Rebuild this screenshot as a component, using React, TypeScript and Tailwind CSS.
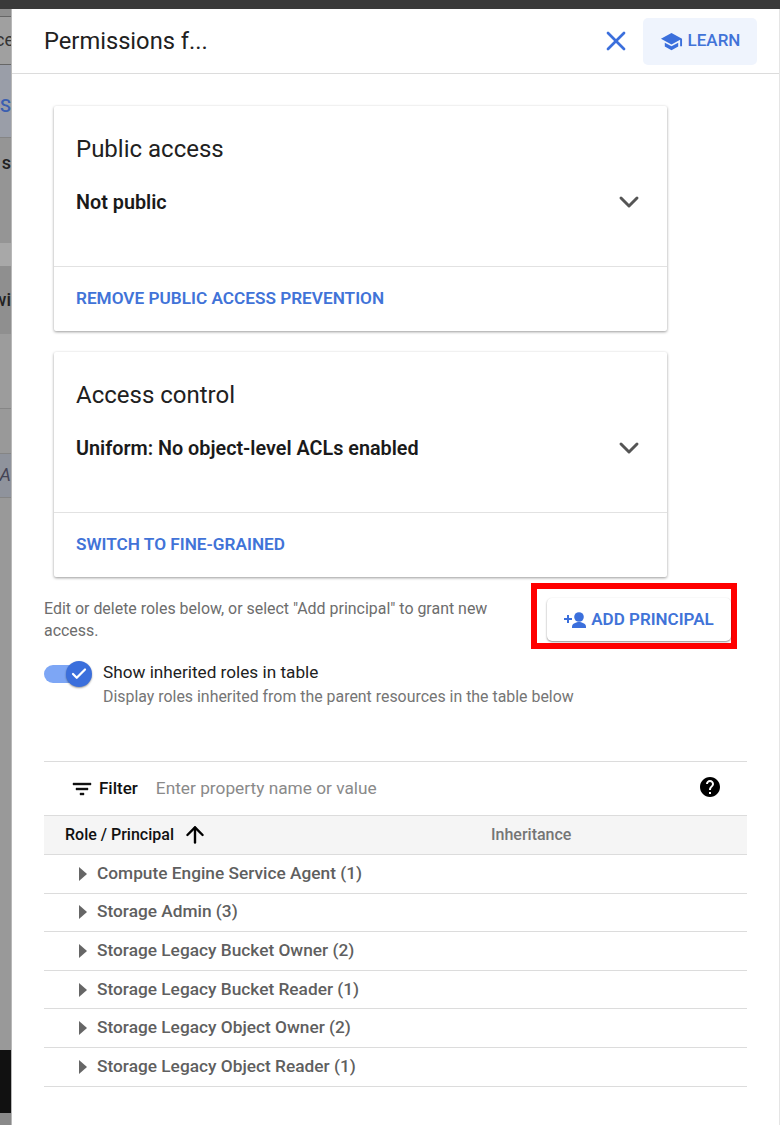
import React from "react";
import { ChevronDown, X, ArrowUp, Check } from "lucide-react";

const roles = [
  "Compute Engine Service Agent (1)",
  "Storage Admin (3)",
  "Storage Legacy Bucket Owner (2)",
  "Storage Legacy Bucket Reader (1)",
  "Storage Legacy Object Owner (2)",
  "Storage Legacy Object Reader (1)",
];

function InfoCard({ title, value, action }: { title: string; value: string; action: string }) {
  return (
    <div className="w-[613px] h-[225px] bg-white rounded-[2px] shadow-[0_1px_3px_rgba(0,0,0,0.4)] flex flex-col">
      <div className="h-[161px] pl-[22px] pr-[22px] pt-[27px] border-b border-[#e2e2e2]">
        <div className="text-[24px] leading-[32px] text-[#212121]">{title}</div>
        <div className="mt-[23px] h-[28px] flex items-center justify-between">
          <span className="pt-[2px] text-[19.8px] leading-[28px] font-semibold text-[#1a1a1a]">{value}</span>
          <ChevronDown className="w-[32px] h-[32px] shrink-0 text-[#555]" strokeWidth={2.2} />
        </div>
      </div>
      <div className="flex-1 px-[22px] flex items-center text-[17.2px] font-semibold text-[#4173d8]">{action}</div>
    </div>
  );
}

export default function App() {
  return (
    <div className="w-[780px] h-[1125px] flex flex-col overflow-hidden bg-[#3a3a3a] font-['Roboto',sans-serif]">
      <div className="h-[9px] shrink-0 bg-[#3a3a3a]" />
      <div className="flex-1 flex min-h-0">
        {/* dimmed page behind the panel */}
        <div className="w-[12px] shrink-0 border-r border-[#b8b8b8] bg-[#999] flex flex-col text-[18px] leading-[24px] overflow-hidden">
          <div className="h-[8px] bg-[#8f8f8f] border-b border-[#666]" />
          <div className="h-[48px] bg-[#a0a0a0] flex items-center justify-end text-[#333] border-b border-[#666]">
            <span className="mr-[-3px]">ce</span>
          </div>
          <div className="h-[73px] pt-[10px] bg-[#9a9ea8] flex items-center justify-end font-medium text-[#3b5fb0] border-b border-[#858585]">
            <span>S</span>
          </div>
          <div className="h-[105px] bg-[#959595] text-[#222] font-medium flex flex-col items-end pt-[13px]">
            <span>s</span>
          </div>
          <div className="h-[23px] bg-[#a8a8a8]" />
          <div className="h-[68px] bg-[#8f8f8f] flex items-center justify-end text-[#222] font-medium">
            <span>wi</span>
          </div>
          <div className="h-[75px] bg-[#9c9c9c] border-b border-[#868686]" />
          <div className="h-[44px] bg-[#999]" />
          <div className="h-[45px] bg-[#8f939c] flex items-center justify-end text-[#445] italic border-y border-[#858585]">
            <span>A</span>
          </div>
          <div className="h-[553px] bg-[#999]" />
          <div className="h-[63px] bg-[#111]" />
          <div className="h-[12px] bg-[#8a8a8a]" />
        </div>

        <div className="flex-1 bg-white border-r border-[#e5e5e5] flex flex-col min-w-0">
          <header className="h-[65px] shrink-0 border-b border-[#dcdcdc] pl-[32px] pr-[22px] flex items-center">
            <h1 className="pt-[2px] text-[23.7px] text-[#212121] flex-1">Permissions f...</h1>
            <X className="w-[32px] h-[32px] text-[#3b6fdc] mr-[11px]" strokeWidth={2} />
            <button className="w-[114px] h-[47px] bg-[#eff4fd] rounded-[5px] flex items-center justify-center gap-[5px] text-[17px] font-medium text-[#4173d8]">
              <svg viewBox="0 0 24 24" className="w-[23px] h-[23px]" fill="#3b6fdc">
                <path d="M5 13.18v4L12 21l7-3.82v-4L12 17l-7-3.82zM12 3 1 9l11 6 9-4.91V17h2V9L12 3z" />
              </svg>
              LEARN
            </button>
          </header>

          <div className="flex-1 pl-[32px] pr-[32px] min-h-0">
            <div className="pl-[10px] pt-[32px] flex flex-col gap-[21px]">
              <InfoCard title="Public access" value="Not public" action="REMOVE PUBLIC ACCESS PREVENTION" />
              <InfoCard title="Access control" value="Uniform: No object-level ACLs enabled" action="SWITCH TO FINE-GRAINED" />
            </div>

            <div className="mt-[6px] relative">
              <p className="w-[470px] pt-[15px] text-[15.95px] leading-[22px] text-[#6d6d6d]">
                Edit or delete roles below, or select "Add principal" to grant new access.
              </p>
              <div className="absolute left-[487px] top-0 w-[206px] h-[66px] border-[6px] border-[#ff0000] pl-[10px] pt-[9px]">
                <button className="w-[184px] h-[43px] bg-white rounded-[5px] shadow-[0_1px_2px_rgba(0,0,0,0.45)] flex items-center justify-center gap-[5px] text-[17px] font-semibold text-[#4173d8]">
                  <svg viewBox="0 0 22 16" className="w-[22px] h-[16px]" fill="#3b6fdc">
                    <path d="M3 3h2v3h3v2H5v3H3V8H0V6h3V3z" />
                    <circle cx="15" cy="5" r="4.8" />
                    <path d="M8 16v-1.5c0-3 4.5-4.5 7-4.5s7 1.5 7 4.5V16H8z" />
                  </svg>
                  ADD PRINCIPAL
                </button>
              </div>
            </div>

            <div className="mt-[19px] flex gap-[11px]">
              <div className="relative w-[48px] h-[26px] shrink-0">
                <div className="absolute left-0 top-[4px] w-[44px] h-[18px] rounded-full bg-[#7da6f5]" />
                <div className="absolute right-0 top-0 w-[26px] h-[26px] rounded-full bg-[#3b6fdc] shadow-[0_1px_2px_rgba(0,0,0,0.4)] flex items-center justify-center">
                  <Check className="w-[18px] h-[18px] text-white" strokeWidth={3} />
                </div>
              </div>
              <div>
                <div className="-mt-[1px] mb-[1px] text-[17.2px] leading-[24px] text-[#212121]">Show inherited roles in table</div>
                <div className="text-[15.9px] leading-[24px] text-[#757575]">Display roles inherited from the parent resources in the table below</div>
              </div>
            </div>

            <div className="mt-[52px] border-t border-[#dcdcdc]">
              <div className="h-[54px] flex items-center pl-[26px] pr-[25px] border-b border-[#dcdcdc]">
                <svg viewBox="0 0 24 24" className="w-[24px] h-[24px] mr-[5px]" fill="#111" stroke="#111" strokeWidth={0.4}>
                  <path d="M10 18h4v-2h-4v2zM3 6v2h18V6H3zm3 7h12v-2H6v2z" />
                </svg>
                <span className="text-[17px] font-medium text-[#111]">Filter</span>
                <span className="ml-[18px] flex-1 text-[17.3px] text-[#8a8a8a]">Enter property name or value</span>
                <svg viewBox="0 0 24 24" className="w-[24px] h-[24px] mb-[3px]" fill="#000">
                  <path d="M12 2C6.48 2 2 6.48 2 12s4.48 10 10 10 10-4.48 10-10S17.52 2 12 2zm1 17h-2v-2h2v2zm2.07-7.75-.9.92C13.45 12.9 13 13.5 13 15h-2v-.5c0-1.1.45-2.1 1.17-2.83l1.24-1.26c.37-.36.59-.86.59-1.41 0-1.1-.9-2-2-2s-2 .9-2 2H8c0-2.21 1.79-4 4-4s4 1.79 4 4c0 .88-.36 1.68-.93 2.25z" />
                </svg>
              </div>
              <div className="h-[39px] bg-[#f5f5f5] flex items-center border-b border-[#dcdcdc] text-[16px] font-medium">
                <div className="w-[447px] pl-[21px] flex items-center gap-[8px] text-[#111]">
                  Role / Principal
                  <ArrowUp className="w-[26px] h-[26px] text-black" strokeWidth={2.2} />
                </div>
                <div className="text-[#757575]">Inheritance</div>
              </div>
              {roles.map((role) => (
                <div key={role} className="h-[38.6px] flex items-center border-b border-[#dcdcdc] pl-[34px]">
                  <svg viewBox="0 0 10 14" className="w-[10px] h-[14px] mr-[9px]" fill="#666">
                    <path d="M1 0l8 7-8 7z" />
                  </svg>
                  <span className="text-[17.3px] font-medium text-[#5f5f5f]">{role}</span>
                </div>
              ))}
            </div>
          </div>
        </div>
      </div>
    </div>
  );
}
